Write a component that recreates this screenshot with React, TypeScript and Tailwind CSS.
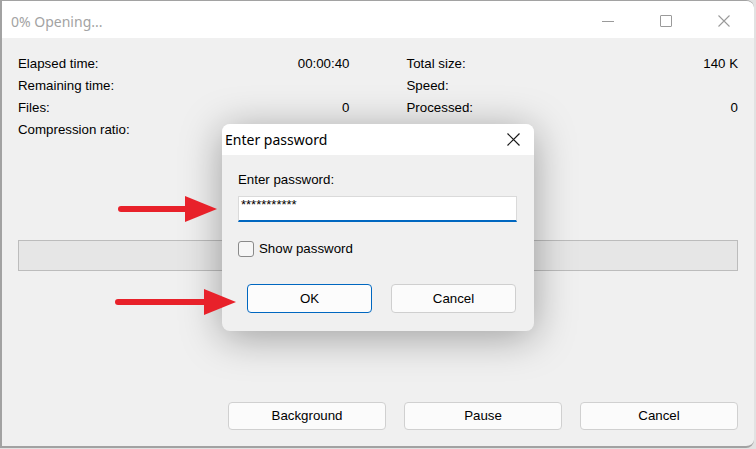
import React from "react";

const body = { fontFamily: '"Liberation Sans", Arial, sans-serif' };
const ui = { fontFamily: '"Noto Sans", "Open Sans", sans-serif' };

function Row({ label, value }: { label: string; value?: string }) {
  return (
    <div className="flex h-[22px] items-center justify-between">
      <span>{label}</span>
      <span>{value ?? ""}</span>
    </div>
  );
}

function Arrow({ x, y, len }: { x: number; y: number; len: number }) {
  return (
    <svg
      className="absolute"
      style={{ left: x, top: y - 14 }}
      width={len}
      height={28}
      viewBox={`0 0 ${len} 28`}
    >
      <line x1={4} y1={14} x2={len - 28} y2={14} stroke="#e8212a" strokeWidth={6} strokeLinecap="round" />
      <polygon points={`${len - 32},1 ${len},14 ${len - 32},27`} fill="#e8212a" />
    </svg>
  );
}

export default function App() {
  return (
    <div className="relative w-[756px] h-[449px] overflow-hidden bg-[#e2e2e2]" style={body}>
      <div className="flex flex-col w-[754px] h-[448px] border-l-2 border-t border-b-2 border-[#a2a2a2] rounded-tr-[8px] rounded-br-[8px] overflow-hidden bg-[#f0f0f0]">
        {/* title bar */}
        <div className="flex h-[37px] shrink-0 items-center justify-between bg-white pl-[9px] pt-[3px]">
          <span className="text-[14px] text-[#a3a3a3]" style={ui}>0% Opening...</span>
          <div className="flex items-center gap-[46px] pr-[24px]">
            <div className="flex h-[12px] w-[12px] items-center">
              <div className="h-px w-[12px] bg-[#9a9a9a]" />
            </div>
            <div className="h-[12px] w-[12px] border border-[#9a9a9a] rounded-[1px]" />
            <svg width="12" height="12" viewBox="0 0 12 12">
              <path d="M0.5 0.5L11.5 11.5M11.5 0.5L0.5 11.5" stroke="#9a9a9a" strokeWidth="1.1" />
            </svg>
          </div>
        </div>
        {/* body */}
        <div className="flex flex-1 flex-col px-[16px] pt-[15px] text-[13.3px] text-black">
          <div className="grid grid-cols-2 gap-x-[57px]">
            <div>
              <Row label="Elapsed time:" value="00:00:40" />
              <Row label="Remaining time:" />
              <Row label="Files:" value="0" />
              <Row label="Compression ratio:" />
            </div>
            <div>
              <Row label="Total size:" value="140 K" />
              <Row label="Speed:" />
              <Row label="Processed:" value="0" />
            </div>
          </div>
          <div className="mt-[99px] h-[31px] border border-[#bcbcbc] bg-[#e6e6e6]" />
          <div className="mt-[131px] flex justify-end gap-[18px]">
            {["Background", "Pause", "Cancel"].map((t) => (
              <div
                key={t}
                className="flex h-[28px] w-[158px] items-center justify-center rounded-[4px] border border-[#d0d0d0] bg-[#fbfbfb]"
              >
                {t}
              </div>
            ))}
          </div>
        </div>
      </div>

      {/* dialog */}
      <div className="absolute left-[222px] top-[124px] flex w-[312px] h-[207px] flex-col overflow-hidden rounded-[8px] bg-[#f0f0f0] shadow-[0_6px_40px_rgba(0,0,0,0.35)]">
        <div className="flex h-[31px] shrink-0 items-center justify-between bg-white pl-[3px] pr-[14px]">
          <span className="text-[14px] text-black" style={ui}>Enter password</span>
          <svg width="13" height="13" viewBox="0 0 13 13">
            <path d="M0.5 0.5L12.5 12.5M12.5 0.5L0.5 12.5" stroke="#1a1a1a" strokeWidth="1.2" />
          </svg>
        </div>
        <div className="flex flex-col pl-[16px] pr-[17px] text-[13.3px] text-black">
          <div className="mt-[16px] h-[18px] leading-[18px]">Enter password:</div>
          <div className="mt-[7px] flex h-[26px] items-start border border-[#dadada] border-b-2 border-b-[#0067c0] bg-white pl-[2px] pt-[1px] text-[13px] leading-[14px]">
            ***********
          </div>
          <div className="mt-[19px] flex h-[16px] items-center gap-[5px]">
            <div className="h-[16px] w-[16px] rounded-[3px] border border-[#8a8a8a] bg-[#f6f6f6]" />
            <span>Show password</span>
          </div>
          <div className="mt-[27px] flex gap-[19px] pl-[9px] pr-[1px]">
            <div className="flex h-[29px] w-[125px] items-center justify-center rounded-[4px] border border-[#0067c0] bg-[#fcfcfc]">
              OK
            </div>
            <div className="flex h-[29px] w-[125px] items-center justify-center rounded-[4px] border border-[#cfcfcf] bg-[#fbfbfb]">
              Cancel
            </div>
          </div>
        </div>
      </div>

      <Arrow x={117} y={209} len={100} />
      <Arrow x={114} y={302} len={122} />
    </div>
  );
}
